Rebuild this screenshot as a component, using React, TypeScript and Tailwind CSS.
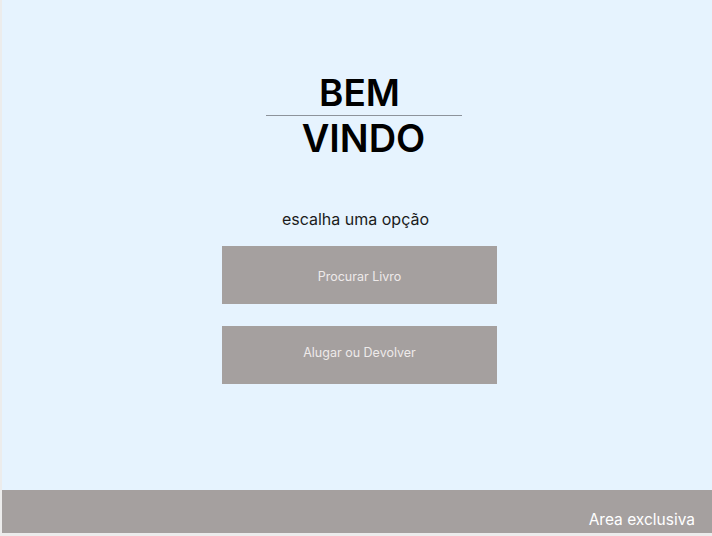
import React from 'react'

const options = [
  { label: 'Procurar Livro', pad: 'pt-[5px]' },
  { label: 'Alugar ou Devolver', pad: 'pb-[3px]' },
]

const App = () => {
  return (
    <div className="w-[712px] h-[536px] bg-[#ececec] font-['Inter','Liberation_Sans',sans-serif]">
      <div className="ml-[2px] w-[710px] h-[533px] bg-[#e6f3fe] flex flex-col">
        <main className="flex-1 flex flex-col items-center pt-[73px] pl-[5px]">
          <h1 className="text-[37px] font-semibold leading-[40px] text-black pl-[4px] pr-[4px]">BEM</h1>
          <div className="w-[196px] h-px bg-[#8d939b] mt-[2px] ml-[8px]" />
          <h1 className="text-[38px] font-semibold leading-[42px] text-black ml-[8px] mt-[1px]">VINDO</h1>

          <p className="mt-[49px] text-[16px] leading-[22px] text-[#1b1b1b] -ml-[8px]">escalha uma opção</p>

          <div className="mt-[16px] flex flex-col gap-[22px]">
            {options.map((o) => (
              <button
                key={o.label}
                className={`w-[275px] h-[58px] bg-[#a5a09f] text-[12.5px] text-[#eeeaea] ${o.pad}`}
              >
                {o.label}
              </button>
            ))}
          </div>
        </main>

        <footer className="h-[43px] bg-[#a5a09f] flex items-end justify-end pr-[17px] pb-[2px]">
          <span className="text-[15.5px] text-white">Area exclusiva</span>
        </footer>
      </div>
    </div>
  )
}

export default App
